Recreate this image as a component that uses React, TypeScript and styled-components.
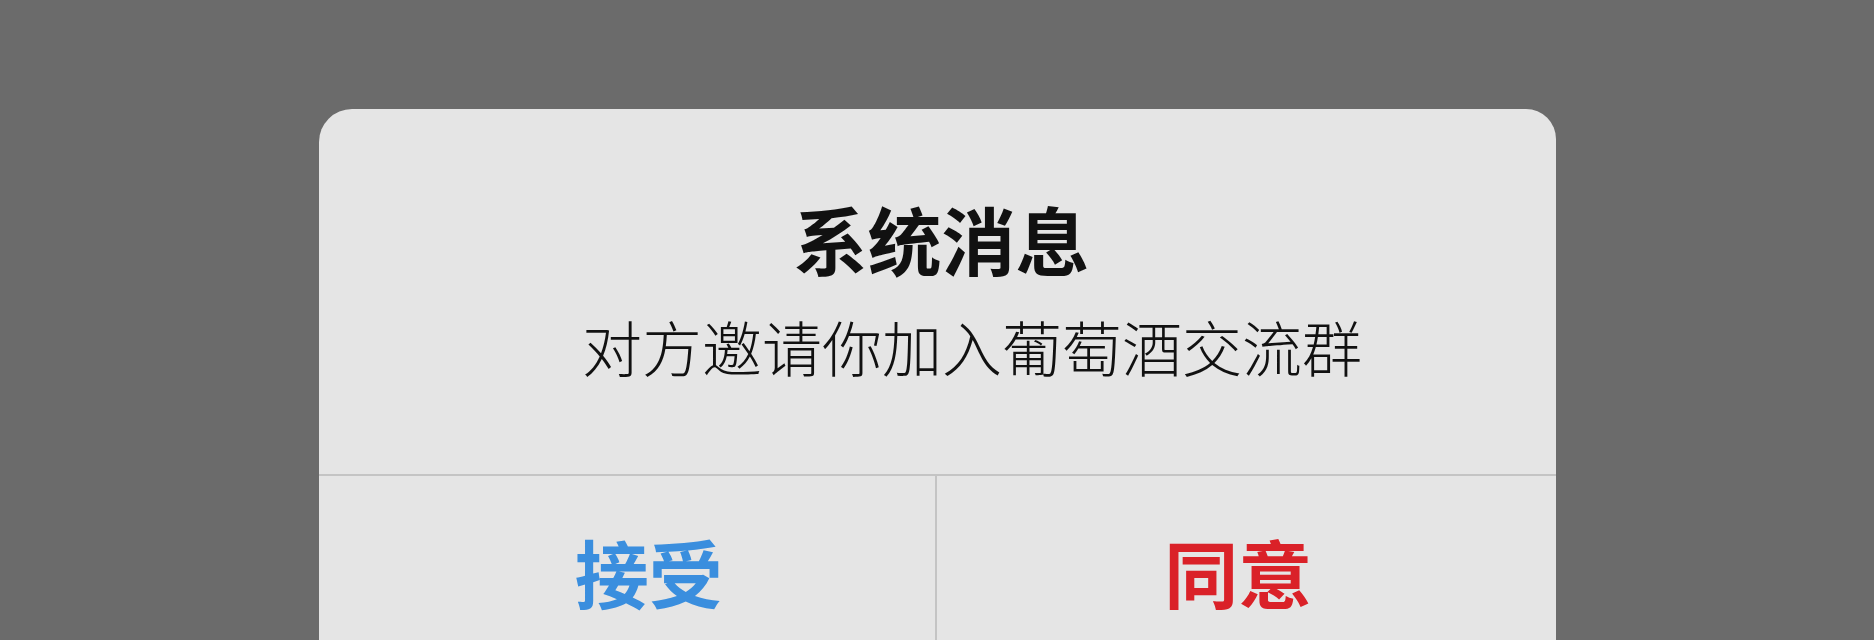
import React from "react";
import styled, { createGlobalStyle } from "styled-components";

const GlobalStyle = createGlobalStyle`
  html, body {
    margin: 0;
    padding: 0;
    background: #6b6b6b;
    font-family: "Noto Sans CJK SC", "Noto Sans", sans-serif;
  }
  #root {
    min-height: 640px;
  }
`;

const Page = styled.div`
  width: 1874px;
  height: 640px;
  overflow: hidden;
  background: #6b6b6b;
  padding-top: 109px;
  box-sizing: border-box;
`;

const Dialog = styled.div`
  width: 1237px;
  height: 600px;
  margin: 0 auto;
  background: #e5e5e5;
  border-radius: 33px 30px 0 0;
  display: flex;
  flex-direction: column;
`;

const Body = styled.div`
  display: flex;
  flex-direction: column;
  align-items: center;
  padding: 92px 0 98px;
  border-bottom: 2px solid #c4c4c4;
`;

const Title = styled.h1`
  margin: 0;
  padding-left: 9px;
  font-size: 74px;
  line-height: 1;
  font-weight: 700;
  color: #111;
`;

const Message = styled.p`
  margin: 41px 0 0;
  padding-left: 70px;
  font-size: 60px;
  line-height: 1;
  font-weight: 300;
  color: #111;
`;

const Actions = styled.div`
  display: grid;
  grid-template-columns: 1fr 1fr;
  flex: 1;
`;

const Action = styled.button<{ $color: string; $shift: number; $divider?: boolean }>`
  all: unset;
  display: flex;
  justify-content: center;
  align-items: flex-start;
  padding-top: 58px;
  padding-left: ${(p) => (p.$shift > 0 ? p.$shift * 2 : 0)}px;
  padding-right: ${(p) => (p.$shift < 0 ? -p.$shift * 2 : 0)}px;
  font-family: "Noto Sans CJK SC", "Noto Sans", sans-serif;
  font-size: 74px;
  line-height: 1;
  font-weight: 700;
  color: ${(p) => p.$color};
  border-right: ${(p) => (p.$divider ? "2px solid #c4c4c4" : "none")};
  cursor: pointer;
`;

export default function App() {
  return (
    <>
      <GlobalStyle />
      <Page>
        <Dialog>
          <Body>
            <Title>系统消息</Title>
            <Message>对方邀请你加入葡萄酒交流群</Message>
          </Body>
          <Actions>
            <Action $color="#3a8ede" $shift={22} $divider>
              接受
            </Action>
            <Action $color="#da2128" $shift={-8}>
              同意
            </Action>
          </Actions>
        </Dialog>
      </Page>
    </>
  );
}
